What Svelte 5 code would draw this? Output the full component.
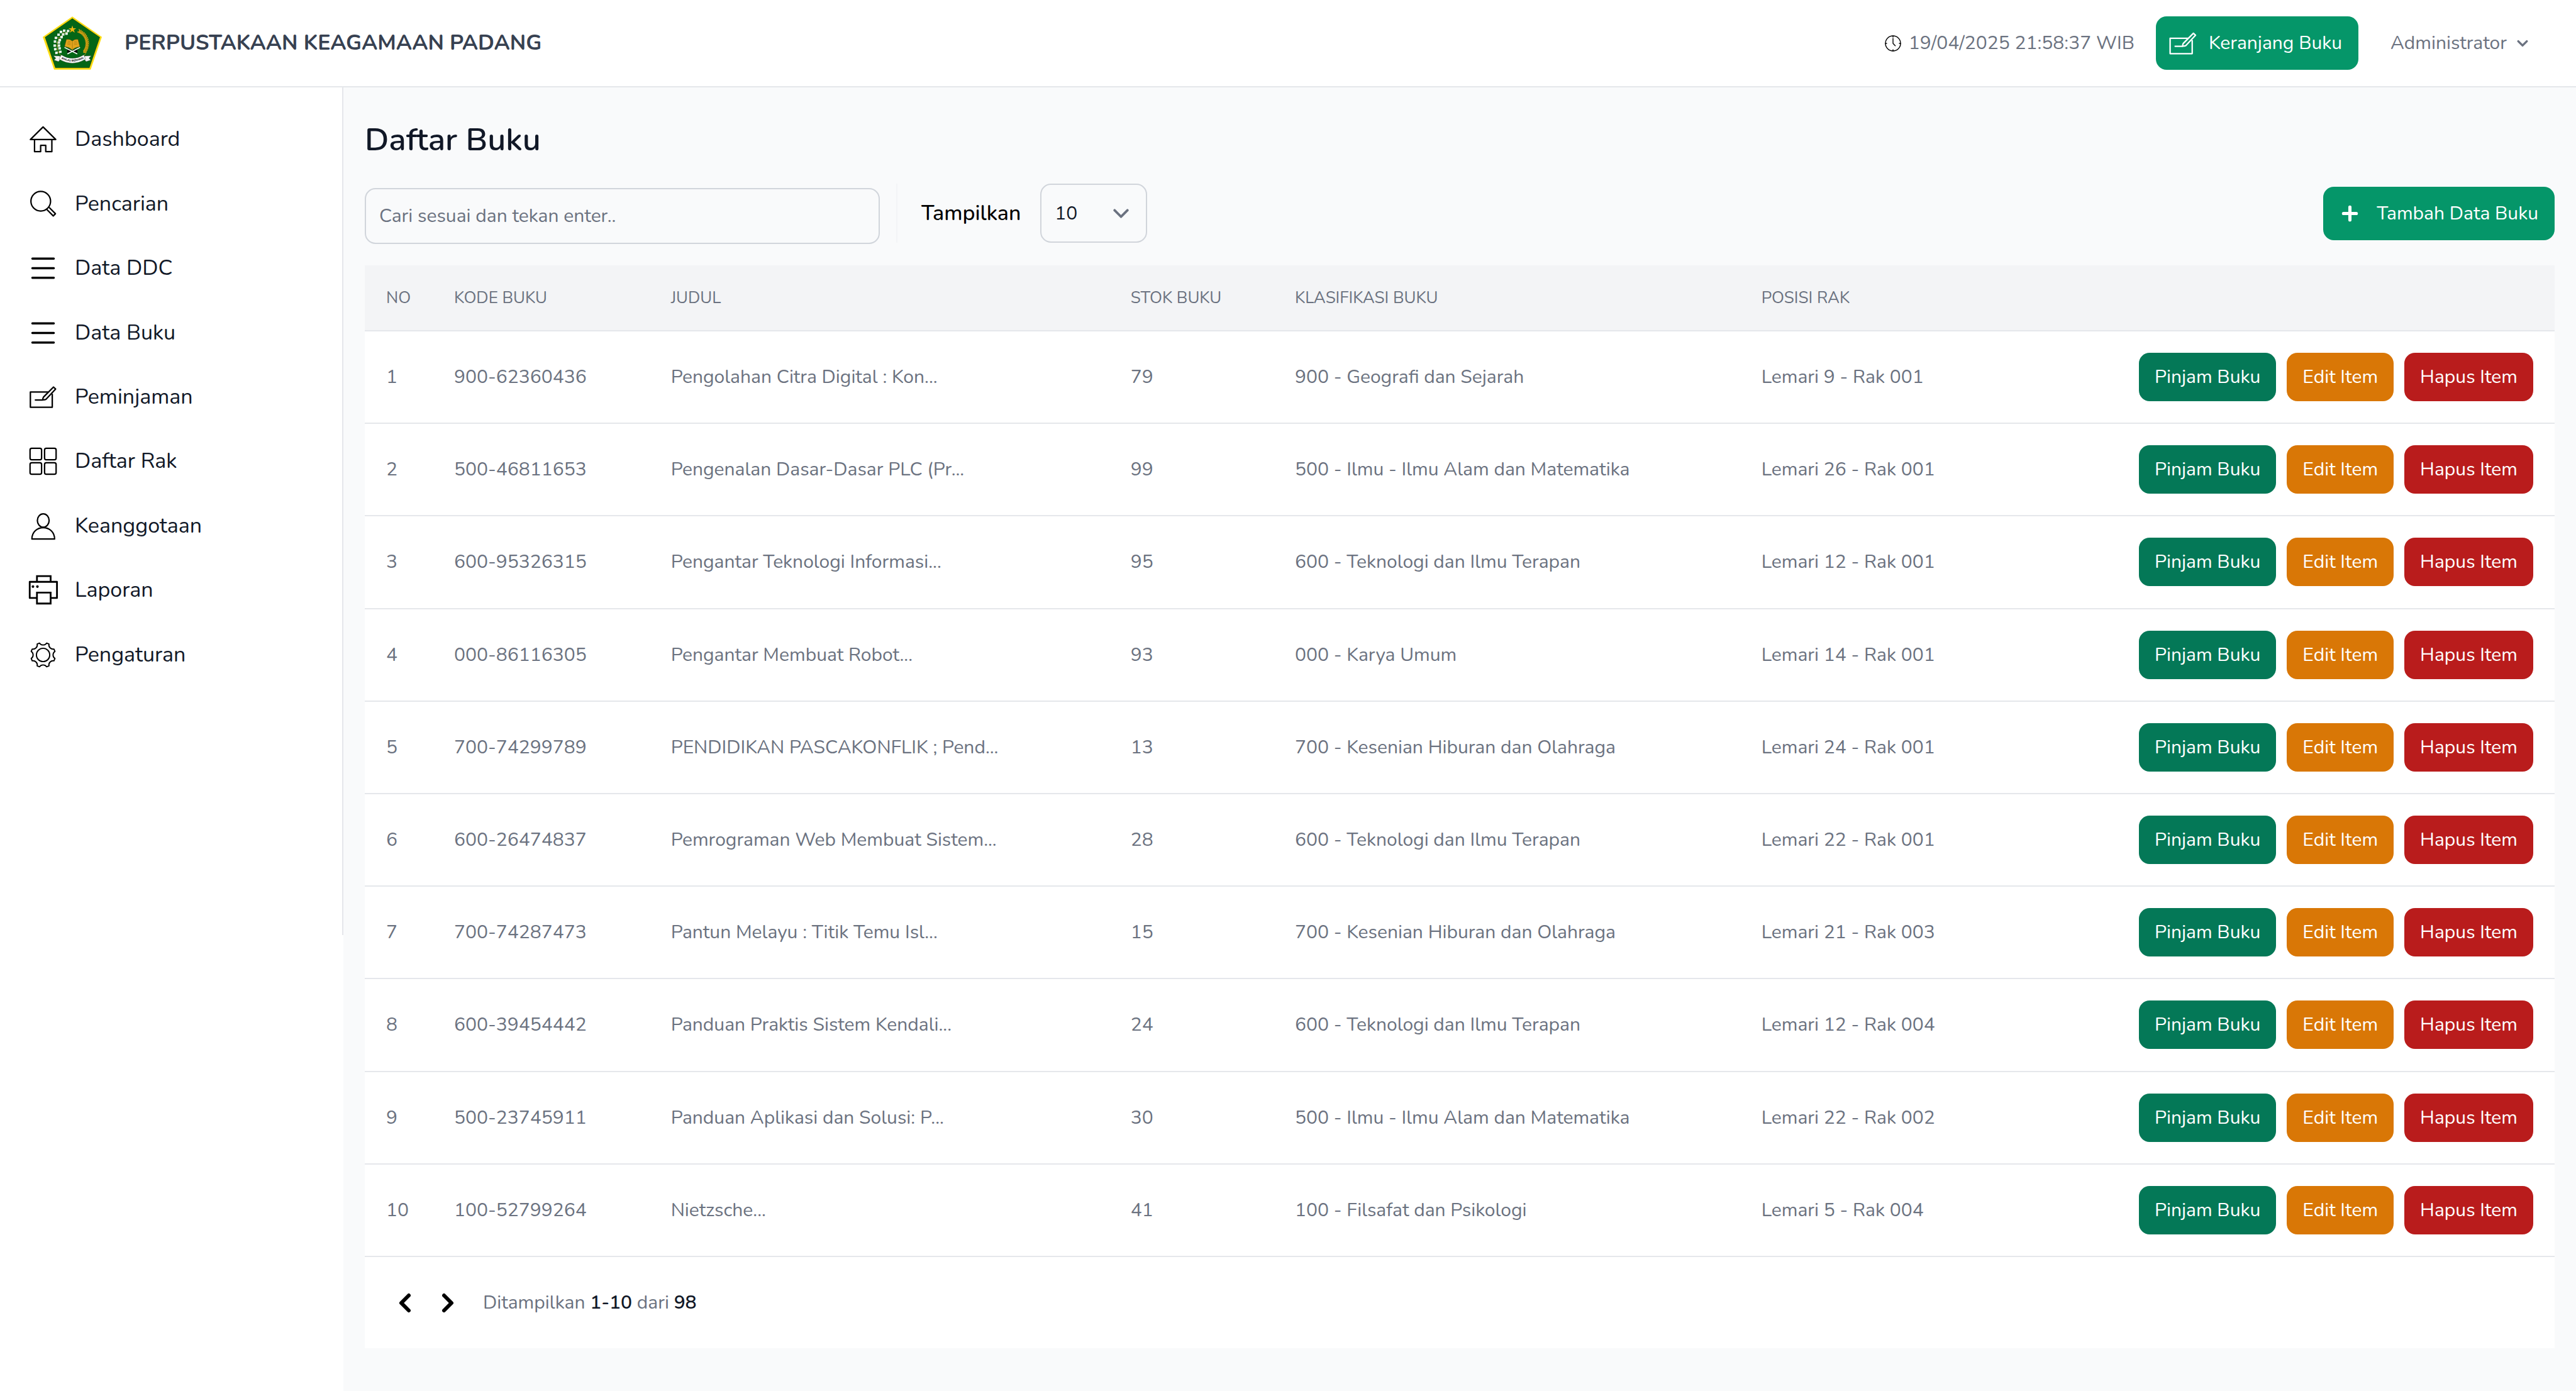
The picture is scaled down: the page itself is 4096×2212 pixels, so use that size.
<script>
  const menu = [
    { label: 'Dashboard', icon: 'home' },
    { label: 'Pencarian', icon: 'search' },
    { label: 'Data DDC', icon: 'list' },
    { label: 'Data Buku', icon: 'list' },
    { label: 'Peminjaman', icon: 'edit' },
    { label: 'Daftar Rak', icon: 'grid' },
    { label: 'Keanggotaan', icon: 'user' },
    { label: 'Laporan', icon: 'printer' },
    { label: 'Pengaturan', icon: 'gear' }
  ];

  const books = [
    [1, '900-62360436', 'Pengolahan Citra Digital : Kon...', 79, '900 - Geografi dan Sejarah', 'Lemari 9 - Rak 001'],
    [2, '500-46811653', 'Pengenalan Dasar-Dasar PLC (Pr...', 99, '500 - Ilmu - Ilmu Alam dan Matematika', 'Lemari 26 - Rak 001'],
    [3, '600-95326315', 'Pengantar Teknologi Informasi...', 95, '600 - Teknologi dan Ilmu Terapan', 'Lemari 12 - Rak 001'],
    [4, '000-86116305', 'Pengantar Membuat Robot...', 93, '000 - Karya Umum', 'Lemari 14 - Rak 001'],
    [5, '700-74299789', 'PENDIDIKAN PASCAKONFLIK ; Pend...', 13, '700 - Kesenian Hiburan dan Olahraga', 'Lemari 24 - Rak 001'],
    [6, '600-26474837', 'Pemrograman Web Membuat Sistem...', 28, '600 - Teknologi dan Ilmu Terapan', 'Lemari 22 - Rak 001'],
    [7, '700-74287473', 'Pantun Melayu : Titik Temu Isl...', 15, '700 - Kesenian Hiburan dan Olahraga', 'Lemari 21 - Rak 003'],
    [8, '600-39454442', 'Panduan Praktis Sistem Kendali...', 24, '600 - Teknologi dan Ilmu Terapan', 'Lemari 12 - Rak 004'],
    [9, '500-23745911', 'Panduan Aplikasi dan Solusi: P...', 30, '500 - Ilmu - Ilmu Alam dan Matematika', 'Lemari 22 - Rak 002'],
    [10, '100-52799264', 'Nietzsche...', 41, '100 - Filsafat dan Psikologi', 'Lemari 5 - Rak 004']
  ];

  let perPage = $state('10');
  let query = $state('');

  // Eight-toothed gear: one valley and one tooth edge per 45 degrees.
  const turn = (x, y, a) =>
    `${(48 + x * Math.cos(a) - y * Math.sin(a)).toFixed(2)} ${(48 + x * Math.sin(a) + y * Math.cos(a)).toFixed(2)}`;
  let gear = '';
  for (let i = 0; i < 8; i++) {
    const a = (i * Math.PI) / 4;
    gear += `${i ? 'L' : 'M'}${turn(-10.5, -35.5, a)} A12 11 ${i * 45} 0 0 ${turn(10.5, -35.5, a)} `;
  }
  gear += 'Z';

  const cotton = [
    [253, 157], [218, 154], [189, 165], [239, 181], [209, 188], [168, 190],
    [195, 212], [144, 219], [179, 238], [136, 251], [171, 260], [133, 287],
    [172, 287], [138, 320], [177, 312], [149, 352], [184, 343]
  ];

  // Rice ear: a pair of grains on each step of the right-hand arc.
  const grains = Array.from({ length: 15 }, (_, i) => {
    const a = ((-64 + i * 7.6) * Math.PI) / 180;
    return { x: 310 + 114 * Math.cos(a), y: 268 + 118 * Math.sin(a), r: -64 + i * 7.6 };
  });
</script>

{#snippet pencil()}
  <path d="M250 158H89V296H287V174" stroke-width="13" />
  <path d="M298 113L317 131L230 224Q220 230 201 229Q201 212 208 203Z" stroke-width="13" />
  <path d="M134 230H200" stroke-width="13" stroke-linecap="round" />
{/snippet}

<div class="page">
  <header class="topbar">
    <a class="brand" href="#beranda">
      <svg class="logo" viewBox="27 27 528 475" role="img" aria-label="Ikhlas Beramal">
        <path d="M291 27L555 210L455 502H128L27 210Z" fill="#fede13" />
        <path d="M291 45L536 213L443 485H140L48 213Z" fill="#046616" stroke="#1c2b05" stroke-width="3" />
        <path
          d="M291 107L299 132H326L304 147L313 172L291 157L269 172L278 147L256 132H283Z"
          fill="#f3b70e"
        />
        <path
          d="M258 160Q215 172 185 205Q150 250 157 300Q160 345 190 378M205 185L216 158M176 215L146 219M165 240L180 238M158 265L135 252M157 290L134 288M158 300L172 288M160 320L138 320M170 345L150 352M172 350L184 343"
          fill="none"
          stroke="#c9a227"
          stroke-width="4"
        />
        {#each cotton as [x, y]}
          <g fill="#fff">
            <circle cx={x - 5} cy={y - 5} r="6.5" />
            <circle cx={x + 6} cy={y - 5} r="6.5" />
            <circle cx={x - 5} cy={y + 5} r="6.5" />
            <circle cx={x + 6} cy={y + 5} r="6" />
          </g>
        {/each}
        <path d="M335 160Q412 180 425 262Q432 330 398 376" fill="none" stroke="#e0a010" stroke-width="4" />
        {#each grains as g}
          <g transform="translate({g.x} {g.y}) rotate({g.r})" fill="#eba915" stroke="#8a7410" stroke-width="1">
            <ellipse cx="10" cy="0" rx="15" ry="4.5" transform="rotate(-48 0 0)" />
            <ellipse cx="-10" cy="0" rx="15" ry="4.5" transform="rotate(48 0 0)" />
          </g>
        {/each}
        <path d="M246 322L262 316L290 334L320 316L334 322L338 354L291 338L244 354Z" fill="#0b0b0b" />
        <path d="M221 303L335 361M360 303L247 361" stroke="#fff" stroke-width="9" />
        <path
          d="M238 232Q270 226 291 246Q312 226 342 232L358 298Q315 300 291 326Q266 302 222 296Z"
          fill="#e3a51c"
          stroke="#5b4208"
          stroke-width="3"
        />
        <path d="M291 248V318" stroke="#7a5a0c" stroke-width="3" />
        <path
          d="M252 248L276 254M248 260L276 267M245 272L276 280M330 248L306 254M334 260L306 267M338 272L306 280"
          stroke="#8a6510"
          stroke-width="3"
        />
        <path
          d="M122 378L178 380L190 400L168 430L128 416L144 400ZM460 378L404 380L392 400L414 430L456 416L440 400Z"
          fill="#f4f4f4"
          stroke="#222"
          stroke-width="2"
        />
        <path
          d="M192 370Q291 432 394 370L410 408Q291 480 172 408Z"
          fill="#fff"
          stroke="#222"
          stroke-width="2"
        />
        <path id="motto" d="M184 398Q291 462 408 393" fill="none" />
        <text class="motto"><textPath href="#motto" startOffset="50%" text-anchor="middle">IKHLAS BERAMAL</textPath></text>
      </svg>
      <span class="brand-name">PERPUSTAKAAN KEAGAMAAN PADANG</span>
    </a>

    <div class="tools">
      <div class="clock">
        <svg class="i-clock" viewBox="61 69 147 149" fill="none" stroke="#000" stroke-width="8" aria-hidden="true">
          <circle cx="134.500" cy="143.500" r="69" />
          <path d="M134.500 74V86M134.500 201V213M65 143.500H77M192 143.500H204" stroke-linecap="round" />
          <path d="M134.500 98V143L155 165" stroke-linecap="round" stroke-linejoin="round" />
        </svg>
        <time>19/04/2025 21:58:37 WIB</time>
      </div>
      <button class="btn primary cart" type="button">
        <svg class="i-cart" viewBox="80 103 248 202" fill="none" stroke="#fff" stroke-linejoin="round" aria-hidden="true">
          {@render pencil()}
        </svg>
        Keranjang Buku
      </button>
      <button class="account" type="button">
        Administrator
        <svg class="i-caret" viewBox="0 0 20 20" fill="currentColor" aria-hidden="true">
          <path d="M5.293 7.293a1 1 0 011.414 0L10 10.586l3.293-3.293a1 1 0 111.414 1.414l-4 4a1 1 0 01-1.414 0l-4-4a1 1 0 010-1.414z" />
        </svg>
      </button>
    </div>
  </header>

  <div class="body">
    <aside class="side">
      <nav class="menu" aria-label="Menu utama">
        <ul>
          {#each menu as item}
            <li>
              <a href="#{item.label}">
                <svg class="i-menu" viewBox="0 0 96 96" fill="none" stroke="#000" stroke-width="4.200" stroke-linejoin="round" aria-hidden="true">
                  {#if item.icon === 'home'}
                    <path d="M48 11L10 48.700H86ZM22.400 48.700V85H40.700V66.200H56V85H74.300V48.700" />
                  {:else if item.icon === 'search'}
                    <circle cx="41" cy="39.600" r="29.400" />
                    <path d="M59 64L78.500 83.500L85 77L66 58" />
                  {:else if item.icon === 'list'}
                    <path d="M16 19.500H80M16 48H80M16 76.600H80" stroke-width="6.600" stroke-linecap="round" />
                  {:else if item.icon === 'edit'}
                    <g transform="translate(-19.500 -19.500) scale(0.331)">{@render pencil()}</g>
                  {:else if item.icon === 'grid'}
                    <rect x="9" y="9" width="34.500" height="34.500" rx="5" />
                    <rect x="52.500" y="9" width="34.500" height="34.500" rx="5" />
                    <rect x="9" y="52.500" width="34.500" height="34.500" rx="5" />
                    <rect x="52.500" y="52.500" width="34.500" height="34.500" rx="5" />
                  {:else if item.icon === 'user'}
                    <ellipse cx="48.500" cy="31.700" rx="17.600" ry="20" />
                    <path d="M14.500 87C14.500 66 30 53 48.500 53S82.500 66 82.500 87Z" />
                  {:else if item.icon === 'printer'}
                    <g stroke-width="5.300">
                      <path d="M29.700 71.300H8V23H89.600V71.300H70.600" />
                      <path d="M29.700 22V6H70.600V22M29.700 55.300H70.600V88H29.700Z" stroke-linejoin="miter" />
                    </g>
                    <circle cx="17.700" cy="37.300" r="4" fill="#000" stroke="none" />
                    <circle cx="31" cy="37.300" r="4" fill="#000" stroke="none" />
                  {:else}
                    <circle cx="48" cy="48" r="20" stroke-width="3.600" />
                    <path d={gear} stroke-width="3.600" />
                  {/if}
                </svg>
                {item.label}
              </a>
            </li>
          {/each}
        </ul>
      </nav>
    </aside>

    <main>
      <h1>Daftar Buku</h1>

      <div class="toolbar">
        <div class="search">
          <input type="text" aria-label="Cari buku" placeholder="Cari sesuai dan tekan enter.." bind:value={query} />
        </div>
        <div class="show">
          <label for="per-page">Tampilkan</label>
          <div class="picker">
            <select id="per-page" bind:value={perPage}>
              <option>10</option>
              <option>25</option>
              <option>50</option>
            </select>
            <svg class="i-select" viewBox="0 0 20 20" fill="none" stroke="#6b7280" stroke-width="1.500" stroke-linecap="round" stroke-linejoin="round" aria-hidden="true">
              <path d="M6 8l4 4 4-4" />
            </svg>
          </div>
        </div>
        <div class="add">
          <button class="btn primary" type="button">
            <svg class="i-plus" viewBox="0 0 20 20" fill="#fff" aria-hidden="true">
              <path d="M10 5a1 1 0 011 1v3h3a1 1 0 110 2h-3v3a1 1 0 11-2 0v-3H6a1 1 0 110-2h3V6a1 1 0 011-1z" />
            </svg>
            Tambah Data Buku
          </button>
        </div>
      </div>

      <table>
        <colgroup>
          <col class="c-no" />
          <col class="c-code" />
          <col class="c-title" />
          <col class="c-stock" />
          <col class="c-class" />
          <col />
          <col class="c-act" />
        </colgroup>
        <thead>
          <tr>
            <th scope="col">NO</th>
            <th scope="col">KODE BUKU</th>
            <th scope="col">JUDUL</th>
            <th scope="col">STOK BUKU</th>
            <th scope="col">KLASIFIKASI BUKU</th>
            <th scope="col">POSISI RAK</th>
            <td></td>
          </tr>
        </thead>
        <tbody>
          {#each books as book}
            <tr>
              {#each book as value}
                <td>{value}</td>
              {/each}
              <td>
                <div class="actions">
                  <button class="btn small loan" type="button">Pinjam Buku</button>
                  <button class="btn small edit" type="button">Edit Item</button>
                  <button class="btn small drop" type="button">Hapus Item</button>
                </div>
              </td>
            </tr>
          {/each}
        </tbody>
      </table>

      <nav class="pager" aria-label="Halaman">
        <button type="button" aria-label="Sebelumnya">
          <svg viewBox="0 0 20 20" aria-hidden="true">
            <path d="M12.707 5.293a1 1 0 010 1.414L9.414 10l3.293 3.293a1 1 0 01-1.414 1.414l-4-4a1 1 0 010-1.414l4-4a1 1 0 011.414 0z" />
          </svg>
        </button>
        <button type="button" aria-label="Berikutnya">
          <svg viewBox="0 0 20 20" aria-hidden="true">
            <path d="M7.293 14.707a1 1 0 010-1.414L10.586 10 7.293 6.707a1 1 0 011.414-1.414l4 4a1 1 0 010 1.414l-4 4a1 1 0 01-1.414 0z" />
          </svg>
        </button>
        <p>Ditampilkan <strong>1-10</strong> dari <strong>98</strong></p>
      </nav>
    </main>
  </div>
</div>

<style>
  :global(body) {
    background: #f9fafb;
  }

  .page {
    min-height: 100vh;
    display: flex;
    flex-direction: column;
    font-family: Nunito, 'Open Sans', sans-serif;
    font-size: 30px;
    line-height: 43px;
    color: #6b7280;
  }

  .page * {
    box-sizing: border-box;
  }

  button,
  input,
  select {
    font: inherit;
    color: inherit;
    border: 0;
    margin: 0;
    padding: 0;
    background: none;
  }

  button {
    cursor: pointer;
  }

  svg {
    display: block;
    flex: none;
  }

  .topbar {
    display: flex;
    align-items: center;
    justify-content: space-between;
    height: 139px;
    padding: 0 68px;
    background: #fff;
    border-bottom: 2px solid #e5e7eb;
  }

  .brand {
    display: flex;
    align-items: center;
    gap: 36px;
    text-decoration: none;
  }

  .logo {
    width: 94px;
    height: 85px;
  }

  .motto {
    font-family: 'Liberation Sans', sans-serif;
    font-size: 24px;
    font-weight: 700;
    fill: #000;
  }

  .brand-name {
    font-size: 34px;
    font-weight: 700;
    color: #374151;
  }

  .tools {
    display: flex;
    align-items: center;
    gap: 34px;
  }

  .clock {
    display: flex;
    align-items: center;
    gap: 12px;
  }

  .i-clock {
    width: 26px;
    height: 26px;
  }

  .btn {
    display: flex;
    align-items: center;
    border-radius: 17px;
    font-weight: 400;
    color: #fff;
    white-space: nowrap;
  }

  .primary {
    height: 85px;
    padding: 0 26px 0 21px;
    gap: 19px;
    background: #059669;
  }

  .i-cart {
    width: 44px;
    height: 36px;
  }

  .account {
    display: flex;
    align-items: center;
    gap: 8px;
    padding-left: 17px;
  }

  .i-caret {
    width: 34px;
    height: 34px;
  }

  .body {
    flex: 1;
    display: flex;
  }

  .side {
    flex: none;
    width: 546px;
    background: #fff;
  }

  .menu {
    min-height: 1348px;
    padding: 40px 26px 0;
    border-right: 2px solid #e5e7eb;
  }

  .menu ul {
    list-style: none;
    margin: 0;
    padding: 0;
    display: grid;
    grid-auto-rows: 1fr;
    gap: 17px;
    min-height: 905px;
  }

  .menu a {
    display: flex;
    align-items: center;
    gap: 25px;
    height: 100%;
    padding: 0 17px;
    font-size: 34px;
    color: #111827;
    text-decoration: none;
  }

  .i-menu {
    width: 51px;
    height: 51px;
  }

  main {
    flex: 1;
    min-width: 0;
    padding: 49px 34px 68px;
  }

  h1 {
    margin: 0 0 36px;
    font-size: 51px;
    line-height: 68px;
    font-weight: 600;
    color: #111827;
  }

  .toolbar {
    display: flex;
    align-items: flex-start;
    margin-bottom: 34px;
  }

  .search {
    width: 24%;
    min-width: 400px;
    max-width: 819px;
    padding-top: 7px;
    margin-right: 26px;
  }

  .search input {
    width: 100%;
    height: 89px;
    padding: 0 21px;
    border: 2px solid #d1d5db;
    border-radius: 17px;
    color: #111827;
  }

  .search input::placeholder {
    color: #6b7280;
    opacity: 1;
  }

  .show {
    display: flex;
    align-items: center;
    gap: 31px;
    height: 94px;
    padding-left: 38px;
    border-left: 2px solid #f3f4f6;
    font-size: 34px;
    font-weight: 500;
    color: #000;
  }

  .picker {
    display: grid;
    align-items: center;
  }

  .picker select {
    grid-area: 1 / 1;
    width: 170px;
    height: 94px;
    padding: 0 21px;
    border: 2px solid #d1d5db;
    border-radius: 17px;
    appearance: none;
    font-size: 30px;
    font-weight: 400;
    color: #111827;
  }

  .i-select {
    grid-area: 1 / 1;
    justify-self: end;
    width: 51px;
    height: 51px;
    margin-right: 16px;
    pointer-events: none;
  }

  .add {
    display: flex;
    align-items: center;
    height: 94px;
    margin-left: auto;
  }

  .i-plus {
    width: 51px;
    height: 51px;
  }

  .add .btn {
    padding-left: 17px;
    gap: 17px;
  }

  table {
    width: 100%;
    height: 1577px;
    table-layout: fixed;
    border-collapse: separate;
    border-spacing: 0;
    background: #fff;
  }

  .c-no {
    width: 3.1%;
  }

  .c-code {
    width: 9.9%;
  }

  .c-title {
    width: 21%;
  }

  .c-stock {
    width: 7.5%;
  }

  .c-class {
    width: 21.3%;
  }

  .c-act {
    width: 20%;
  }

  th,
  td {
    padding: 0 0 0 34px;
    border-bottom: 2px solid #e5e7eb;
    text-align: left;
    white-space: nowrap;
  }

  thead tr {
    height: 105px;
    background: #f3f4f6;
  }

  th {
    font-size: 26px;
    font-weight: 400;
  }

  tbody td {
    padding-top: 34px;
    padding-bottom: 34px;
  }

  .actions {
    display: flex;
    justify-content: flex-end;
    gap: 17px;
    padding-right: 34px;
  }

  .small {
    height: 77px;
    padding: 0 25px;
  }

  .loan {
    background: #047857;
  }

  .edit {
    background: #d97706;
  }

  .drop {
    background: #b91c1c;
  }

  .pager {
    display: flex;
    align-items: center;
    height: 145px;
    padding: 0 34px;
    gap: 8px;
    background: #fff;
  }

  .pager svg {
    width: 60px;
    height: 60px;
    fill: #000;
  }

  .pager p {
    margin: 0 0 0 18px;
  }

  .pager strong {
    font-weight: 600;
    color: #111827;
  }
</style>
